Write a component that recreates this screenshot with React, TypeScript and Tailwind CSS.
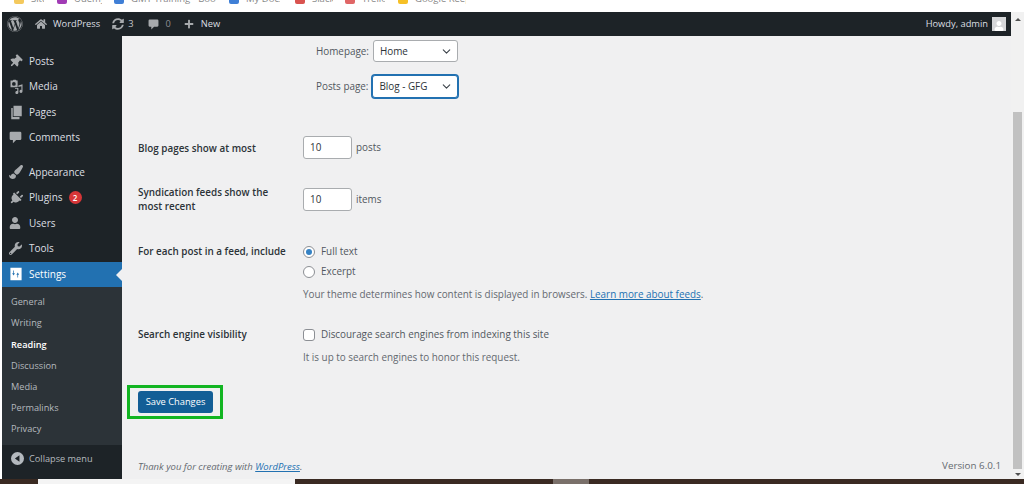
import { FaWordpress, FaHome, FaPlus, FaThumbtack, FaPaintBrush, FaPlug, FaUser, FaWrench, FaSyncAlt } from 'react-icons/fa';
import { ChevronDown } from 'lucide-react';
import type { ReactNode } from 'react';

const bookmarks = [
  { label: 'Site', color: 'bg-[#f4c95d]', iconMargin: 'ml-[14px]', textWidth: 'w-[13px]' },
  { label: 'Udemy', color: 'bg-[#a13bb5]', iconMargin: 'ml-[13px]', textWidth: 'w-[28px]' },
  { label: 'GMT Training - Book', color: 'bg-[#3f7fd6]', iconMargin: 'ml-[12px]', textWidth: 'w-[85px]' },
  { label: 'My Docs', color: 'bg-[#3f7fd6]', iconMargin: 'ml-[13px]', textWidth: 'w-[34px]' },
  { label: 'Slack', color: 'bg-[#d9534f]', iconMargin: 'ml-[15px]', textWidth: 'w-[21px]' },
  { label: 'Trello', color: 'bg-[#e06666]', iconMargin: 'ml-[12px]', textWidth: 'w-[23px]' },
  { label: 'Google Keep', color: 'bg-[#f6c026]', iconMargin: 'ml-[13px]', textWidth: 'w-[51px]' },
];

function MediaIcon() {
  return (
    <svg viewBox="0 0 20 20" className="w-[15px] h-[15px]" fill="currentColor">
      <path d="M2 2h3l1-1h3l1 1h1.500v9H2zM6.500 4a2.500 2.500 0 1 0 0 5 2.500 2.500 0 0 0 0-5z" />
      <path d="M18 7v9.500a2 2 0 1 1-1.500-1.900V9.500l-4 1v7.500a2 2 0 1 1-1.500-1.900V13H8v-1h4.500V8.500z" />
    </svg>
  );
}

function PagesIcon() {
  return (
    <svg viewBox="0 0 20 20" className="w-[15px] h-[15px]" fill="currentColor">
      <path d="M6 1h11v14H6z" />
      <path d="M3 4h2v12h9v3H3z" />
    </svg>
  );
}

function BubbleIcon({ className }: { className: string }) {
  return (
    <svg viewBox="0 0 20 20" className={className} fill="currentColor">
      <path d="M3 1h14a2 2 0 0 1 2 2v9a2 2 0 0 1-2 2h-6l-5 5v-5H3a2 2 0 0 1-2-2V3a2 2 0 0 1 2-2z" />
    </svg>
  );
}

function SettingsIcon() {
  return (
    <svg viewBox="0 0 20 20" className="w-[14px] h-[14px]" fill="currentColor">
      <path
        fillRule="evenodd"
        d="M2 1h16v18H2zM6 5v4H4.500l2 3 2-3H7V5zM13 15v-4h1.500l-2-3-2 3H12v4z"
      />
    </svg>
  );
}

function CollapseIcon() {
  return (
    <svg viewBox="0 0 20 20" className="w-[13px] h-[13px]" fill="currentColor">
      <path fillRule="evenodd" d="M10 0a10 10 0 1 1 0 20 10 10 0 0 1 0-20zM13 5l-7 5 7 5z" />
    </svg>
  );
}

const menuTop: { label: string; icon: ReactNode }[] = [
  { label: 'Posts', icon: <FaThumbtack className="w-[13px] h-[13px] rotate-[45deg]" /> },
  { label: 'Media', icon: <MediaIcon /> },
  { label: 'Pages', icon: <PagesIcon /> },
  { label: 'Comments', icon: <BubbleIcon className="w-[13px] h-[13px]" /> },
];

const menuBottom: { label: string; icon: ReactNode; badge?: string }[] = [
  { label: 'Appearance', icon: <FaPaintBrush className="w-[14px] h-[14px]" /> },
  { label: 'Plugins', icon: <FaPlug className="w-[14px] h-[14px] rotate-[45deg]" />, badge: '2' },
  { label: 'Users', icon: <FaUser className="w-[12px] h-[12px]" /> },
  { label: 'Tools', icon: <FaWrench className="w-[13px] h-[13px]" /> },
];

const subMenu = ['General', 'Writing', 'Reading', 'Discussion', 'Media', 'Permalinks', 'Privacy'];

function MenuItem({ label, icon, badge }: { label: string; icon: ReactNode; badge?: string }) {
  return (
    <div className="h-[25.500px] flex items-center text-[#dcdfe2] text-[10px]">
      <span className="w-[27px] pl-[7px] flex justify-start text-[#a7aaad]">{icon}</span>
      <span>{label}</span>
      {badge && (
        <span className="ml-[6px] w-[13px] h-[13px] rounded-full bg-[#d63638] text-white text-[8px] font-semibold flex items-center justify-center">
          {badge}
        </span>
      )}
    </div>
  );
}

function Row({ label, children, className, labelClass }: { label: ReactNode; children: ReactNode; className: string; labelClass?: string }) {
  return (
    <div className={`flex ${className}`}>
      <div className={`w-[165px] shrink-0 font-semibold text-[#2c3338] whitespace-nowrap ${labelClass ?? 'leading-[15px]'}`}>{label}</div>
      <div className="flex-1">{children}</div>
    </div>
  );
}

function SelectBox({ value, focused }: { value: string; focused?: boolean }) {
  return (
    <div
      className={
        focused
          ? 'w-[86px] h-[23px] pl-[6px] pr-[4px] flex items-center justify-between bg-white rounded-[3px] border border-[#2271b1] shadow-[0_0_0_1px_#2271b1] text-[#2c3338]'
          : 'w-[85px] h-[22px] pl-[6px] pr-[4px] flex items-center justify-between bg-white rounded-[3px] border border-[#a9acaf] text-[#2c3338]'
      }
    >
      <span>{value}</span>
      <ChevronDown className="w-[13px] h-[13px] text-[#3c434a]" strokeWidth={2} />
    </div>
  );
}

function NumberBox({ unit }: { unit: string }) {
  return (
    <div className="flex items-center gap-[4px] text-[#50575e]">
      <div className="w-[49px] h-[23px] pl-[6px] flex items-center bg-white rounded-[3px] border border-[#a9acaf] text-[#2c3338]">
        10
      </div>
      <span>{unit}</span>
    </div>
  );
}

export default function App() {
  return (
    <div className="h-[484px] w-[1024px] overflow-hidden flex flex-col bg-white text-[9.900px] font-['Open_Sans','Noto_Sans',sans-serif]">
      {/* cut off bookmarks bar */}
      <div className="h-[12px] shrink-0 overflow-hidden flex items-start text-[9.500px] text-[#888]">
        {bookmarks.map((b) => (
          <div key={b.label} className={`flex items-end h-[4px] ${b.iconMargin}`}>
            <span className={`w-[10px] h-[10px] mr-[7px] rounded-[2px] shrink-0 ${b.color}`} />
            <span className={`whitespace-nowrap overflow-hidden leading-[10px] ${b.textWidth}`}>{b.label}</span>
          </div>
        ))}
      </div>

      <div className="flex-1 min-h-0 flex pl-[2px]">
        <div className="flex-1 min-w-0 flex flex-col">
          {/* admin bar */}
          <div className="h-[24px] shrink-0 bg-[#1d2327] flex items-center text-[#dcdfe2] text-[9.300px] pl-[5px] pr-[5px]">
            <FaWordpress className="w-[16px] h-[16px] text-[#a7aaad]" />
            <FaHome className="ml-[12px] w-[12px] h-[12px] text-[#a7aaad]" />
            <span className="ml-[6px]">WordPress</span>
            <FaSyncAlt className="ml-[12px] w-[12px] h-[12px] text-[#a7aaad]" />
            <span className="ml-[4px] text-[#c3c4c7]">3</span>
            <BubbleIcon className="ml-[15px] w-[11px] h-[11px] text-[#a7aaad]" />
            <span className="ml-[6px] text-[#8c8f94]">0</span>
            <FaPlus className="ml-[13px] w-[10px] h-[10px] text-[#a7aaad]" />
            <span className="ml-[7px]">New</span>
            <span className="ml-auto">Howdy, admin</span>
            <span className="ml-[4px] w-[14px] h-[14px] bg-[#d5d6d8] flex items-end justify-center overflow-hidden">
              <FaUser className="w-[10px] h-[10px] text-white" />
            </span>
          </div>

          <div className="flex-1 min-h-0 flex">
            {/* sidebar */}
            <div className="w-[120px] shrink-0 bg-[#1d2327] flex flex-col pt-[12.500px]">
              {menuTop.map((m) => (
                <MenuItem key={m.label} label={m.label} icon={m.icon} />
              ))}
              <div className="h-[9px]" />
              {menuBottom.map((m) => (
                <MenuItem key={m.label} label={m.label} icon={m.icon} badge={m.badge} />
              ))}
              <div className="relative h-[25px] flex items-center bg-[#2271b1] text-white text-[10px]">
                <span className="w-[27px] pl-[7px] flex">
                  <SettingsIcon />
                </span>
                <span>Settings</span>
                <span className="absolute right-0 top-[7px] border-y-[6px] border-y-transparent border-r-[6px] border-r-[#f0f0f1]" />
              </div>
              <div className="bg-[#2c3338] pt-[5px] pb-[5px]">
                {subMenu.map((s) => (
                  <div
                    key={s}
                    className={
                      s === 'Reading'
                        ? 'h-[21.200px] pl-[9px] flex items-center font-semibold text-white text-[9.200px]'
                        : 'h-[21.200px] pl-[9px] flex items-center text-[#b4b9be] text-[9.200px]'
                    }
                  >
                    {s}
                  </div>
                ))}
              </div>
              <div className="flex-1 flex items-start pt-[6px] pl-[9px] text-[#b4b9be]">
                <span className="w-[18px] h-[15px] flex items-center">
                  <CollapseIcon />
                </span>
                <span className="text-[9.200px] leading-[15px]">Collapse menu</span>
              </div>
            </div>

            {/* main */}
            <div className="flex-1 min-w-0 bg-[#f0f0f1] flex flex-col pl-[16px] pr-[10px] text-[#50575e]">
              <div className="pt-[4px] pl-[165px]">
                <div className="flex items-center pl-[13px] h-[22px] gap-[4px]">
                  <span>Homepage:</span>
                  <SelectBox value="Home" />
                </div>
                <div className="flex items-center pl-[13px] h-[23px] mt-[13px] gap-[4px]">
                  <span>Posts page:</span>
                  <SelectBox value="Blog - GFG" focused />
                </div>
              </div>

              <Row
                label="Blog pages show at most"
                labelClass="leading-[15px] pt-[1px]"
                className="mt-[38px] items-center h-[23px]"
              >
                <NumberBox unit="posts" />
              </Row>
              <Row
                label={<>Syndication feeds show the<br />most recent</>}
                labelClass="leading-[14px] -mt-[3px]"
                className="mt-[29px]"
              >
                <NumberBox unit="items" />
              </Row>
              <Row label="For each post in a feed, include" className="mt-[31px]">
                <div className="flex items-center gap-[6px] h-[15px]">
                  <span className="w-[12px] h-[12px] rounded-full bg-white border border-[#8c8f94] flex items-center justify-center">
                    <span className="w-[6px] h-[6px] rounded-full bg-[#3582c4]" />
                  </span>
                  <span>Full text</span>
                </div>
                <div className="flex items-center gap-[6px] h-[15px] mt-[5px]">
                  <span className="w-[12px] h-[12px] rounded-full bg-white border border-[#8c8f94]" />
                  <span>Excerpt</span>
                </div>
                <p className="mt-[8px] leading-[15px] text-[#646970]">
                  Your theme determines how content is displayed in browsers.{' '}
                  <span className="text-[#2271b1] underline">Learn more about feeds</span>.
                </p>
              </Row>
              <Row label="Search engine visibility" className="mt-[25px]">
                <div className="flex items-center gap-[6px] h-[15px]">
                  <span className="w-[12px] h-[12px] rounded-[3px] bg-white border border-[#8c8f94]" />
                  <span>Discourage search engines from indexing this site</span>
                </div>
                <p className="mt-[8px] leading-[15px] text-[#646970]">It is up to search engines to honor this request.</p>
              </Row>

              <div className="mt-[20px] -ml-[11px] w-[96px] h-[34px] shrink-0 border-[3px] border-[#12b522] flex items-center justify-start pl-[8px]">
                <div className="w-[75px] h-[22px] shrink-0 rounded-[3px] bg-[#135e96] text-white text-[9.300px] flex items-center justify-center">
                  Save Changes
                </div>
              </div>

              <div className="mt-auto mb-[5px] flex justify-between items-center text-[#646970]">
                <span className="italic text-[9.500px]">
                  Thank you for creating with <span className="text-[#2271b1] underline">WordPress</span>.
                </span>
                <span className="text-[9.800px]">Version 6.0.1</span>
              </div>
            </div>
          </div>
        </div>

        {/* scrollbar */}
        <div className="w-[13px] shrink-0 bg-[#f1f1f1] flex flex-col items-center pt-[6px] pb-[3px]">
          <span className="border-x-[3px] border-x-transparent border-b-[3px] border-b-[#505050]" />
          <div className="flex-1 w-full mt-[4px] flex items-end justify-center">
            <div className="w-[9px] h-[357px] bg-[#c1c1c1]" />
          </div>
          <span className="mt-[4px] border-x-[3px] border-x-transparent border-t-[3px] border-t-[#505050]" />
        </div>
      </div>

      {/* desktop strip under the window */}
      <div className="h-[5px] shrink-0 bg-[#3a2a22] flex">
        <div className="ml-[38px] w-[257px] bg-[#f4f4f4]" />
        <div className="ml-[258px] w-[36px] bg-[#7a706a]" />
      </div>
    </div>
  );
}
